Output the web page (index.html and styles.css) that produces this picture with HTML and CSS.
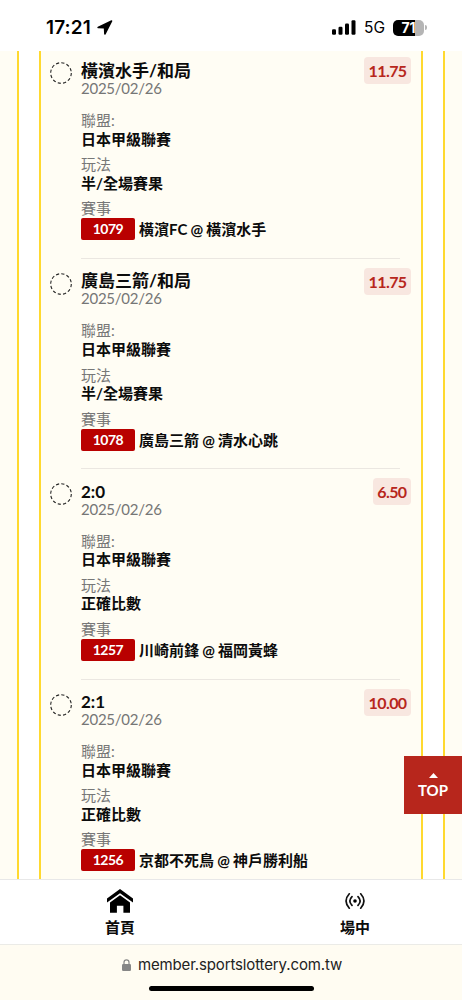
FILE: index.html
```html
<!DOCTYPE html>
<html lang="zh-Hant">
<head>
  <meta charset="UTF-8">
  <meta name="viewport" content="width=device-width, initial-scale=1.0">
  <title>Sports Lottery</title>
  <link rel="stylesheet" href="styles.css">
</head>
<body>
  <div class="status-bar">
    <div class="status-left">
      <span class="clock">17:21</span>
      <svg class="location" width="16" height="15" viewBox="0 0 16 15"><path d="M14.3 0.2 L0.8 6.8 Q-0.3 8 1 8.3 L6.8 8.4 L7.1 14 Q7.5 15.4 8.7 14.2 L15.3 1.2 Q15.5 0 14.3 0.2Z"/></svg>
    </div>
    <div class="status-right">
      <svg class="signal" width="24" height="15" viewBox="0 0 24 15">
        <rect x="0" y="9.2" width="4" height="5.6" rx="1.2"/>
        <rect x="6.5" y="6.7" width="4" height="8.1" rx="1.2"/>
        <rect x="13" y="3.5" width="4" height="11.3" rx="1.2"/>
        <rect x="19.5" y="0.2" width="4" height="14.6" rx="1.2"/>
      </svg>
      <span class="network">5G</span>
      <div class="battery"><span>71</span></div>
      <div class="battery-cap"></div>
    </div>
  </div>

  <div class="page">
    <div class="panel">
      <div class="bets">
        <div class="bet">
          <svg class="dot" width="22" height="22" viewBox="0 0 22 22"><circle cx="11" cy="11" r="10.3"/></svg>
          <div class="bet-body">
            <div class="bet-title">橫濱水手/和局</div>
            <div class="bet-date">2025/02/26</div>
            <div class="field first"><div class="label">聯盟:</div><div class="value">日本甲級聯賽</div></div>
            <div class="field"><div class="label">玩法</div><div class="value">半/全場賽果</div></div>
            <div class="field"><div class="label">賽事</div><div class="match"><span class="code">1079</span>橫濱FC @ 橫濱水手</div></div>
          </div>
          <div class="odds">11.75</div>
        </div>

        <div class="bet">
          <svg class="dot" width="22" height="22" viewBox="0 0 22 22"><circle cx="11" cy="11" r="10.3"/></svg>
          <div class="bet-body">
            <div class="bet-title">廣島三箭/和局</div>
            <div class="bet-date">2025/02/26</div>
            <div class="field first"><div class="label">聯盟:</div><div class="value">日本甲級聯賽</div></div>
            <div class="field"><div class="label">玩法</div><div class="value">半/全場賽果</div></div>
            <div class="field"><div class="label">賽事</div><div class="match"><span class="code">1078</span>廣島三箭 @ 清水心跳</div></div>
          </div>
          <div class="odds">11.75</div>
        </div>

        <div class="bet">
          <svg class="dot" width="22" height="22" viewBox="0 0 22 22"><circle cx="11" cy="11" r="10.3"/></svg>
          <div class="bet-body">
            <div class="bet-title">2:0</div>
            <div class="bet-date">2025/02/26</div>
            <div class="field first"><div class="label">聯盟:</div><div class="value">日本甲級聯賽</div></div>
            <div class="field"><div class="label">玩法</div><div class="value">正確比數</div></div>
            <div class="field"><div class="label">賽事</div><div class="match"><span class="code">1257</span>川崎前鋒 @ 福岡黃蜂</div></div>
          </div>
          <div class="odds">6.50</div>
        </div>

        <div class="bet">
          <svg class="dot" width="22" height="22" viewBox="0 0 22 22"><circle cx="11" cy="11" r="10.3"/></svg>
          <div class="bet-body">
            <div class="bet-title">2:1</div>
            <div class="bet-date">2025/02/26</div>
            <div class="field first"><div class="label">聯盟:</div><div class="value">日本甲級聯賽</div></div>
            <div class="field"><div class="label">玩法</div><div class="value">正確比數</div></div>
            <div class="field"><div class="label">賽事</div><div class="match"><span class="code">1256</span>京都不死鳥 @ 神戶勝利船</div></div>
          </div>
          <div class="odds">10.00</div>
        </div>
      </div>
    </div>
  </div>

  <a class="top-btn" href="#">
    <svg width="9" height="5" viewBox="0 0 9 5"><path d="M4.5 0 L9 5 H0Z"/></svg>
    <span>TOP</span>
  </a>

  <nav class="tab-bar">
    <a class="tab home" href="#">
      <svg width="26" height="24" viewBox="0 0 26 24"><path d="M13 0 L26 9.4 V13.6 L13 4.3 L0 13.6 V9.4Z"/><path d="M13 6.3 L23 13.4 V23.7 H16.4 V16.8 H9.9 V23.7 H3 V13.4Z"/></svg>
      <span>首頁</span>
    </a>
    <a class="tab live" href="#">
      <svg width="20" height="16" viewBox="0 0 20 16"><circle cx="10" cy="8" r="1.8"/><path d="M4.3 0.8 Q-2.2 8 4.3 15.2 M7 3.6 Q2.7 8 7 12.4 M13 3.6 Q17.3 8 13 12.4 M15.7 0.8 Q22.2 8 15.7 15.2"/></svg>
      <span>場中</span>
    </a>
  </nav>

  <div class="address-bar">
    <div class="address">
      <svg width="9" height="12" viewBox="0 0 9 12"><rect x="0" y="5" width="9" height="7" rx="1.2"/><path d="M2 5.5 V3.3 Q2 0.8 4.5 0.8 Q7 0.8 7 3.3 V5.5"/></svg>
      <span>member.sportslottery.com.tw</span>
    </div>
    <div class="home-indicator"></div>
  </div>
</body>
</html>
```

FILE: styles.css
```css
:root {
  --cream: #fffdf4;
  --yellow: #ffd92f;
  --red: #b7261c;
}

* {
  box-sizing: border-box;
}

body {
  margin: 0;
  height: 1000px;
  display: flex;
  flex-direction: column;
  overflow: hidden;
  background: var(--cream);
  color: #0c0c0c;
  font-family: Lato, "Noto Sans CJK TC", sans-serif;
}

a {
  color: inherit;
  text-decoration: none;
}

/* Status bar */
.status-bar {
  height: 51px;
  flex: none;
  background: #fff;
  display: flex;
  justify-content: space-between;
  padding: 18px 35px 0 46px;
  font-family: Inter, sans-serif;
  color: #000;
}

.status-left,
.status-right {
  display: flex;
  height: 19px;
  align-items: center;
}

.clock {
  font-size: 19px;
  font-weight: 600;
  letter-spacing: 0.1px;
  width: 51px;
}

.signal {
  margin-right: 8px;
}

.network {
  font-size: 15.5px;
  width: 29px;
}

.battery {
  width: 31px;
  height: 16px;
  border-radius: 5px;
  background: linear-gradient(90deg, #000 71%, #b5b5b5 71%);
  color: #fff;
  font-size: 14px;
  font-weight: 700;
  line-height: 16px;
  text-align: center;
}

.battery-cap {
  width: 2px;
  height: 5px;
  margin-left: 1px;
  border-radius: 0 2px 2px 0;
  background: #b5b5b5;
}

/* Bet list */
.page {
  height: 828px;
  flex: none;
  overflow: hidden;
  padding: 0 17px;
}

.panel {
  height: 100%;
  padding: 0 20px;
  background: #fff;
  border: solid var(--yellow);
  border-width: 0 2px;
}

.bets {
  display: flow-root;
  height: 100%;
  background: var(--cream);
  border: solid var(--yellow);
  border-width: 0 2px;
}

.bet {
  height: 210.4px;
  display: flex;
  align-items: flex-start;
  padding: 0 10px;
}

.bet:first-child {
  margin-top: -2.6px;
}

.dot {
  flex: none;
  margin: 14px 9px 0 -1px;
}

.dot circle {
  fill: none;
  stroke: #222;
  stroke-width: 1.1;
  stroke-dasharray: 3.2 2.19;
}

.bet-body {
  height: 100%;
  width: 319px;
  flex: none;
  margin-right: -60px;
  padding-top: 12.5px;
  border-bottom: 1px solid #ebe7e1;
}

.bet-title {
  font-size: 17px;
  font-weight: 700;
  line-height: 20px;
}

.bet-date {
  margin-top: -1px;
  font-size: 15px;
  line-height: 16px;
  letter-spacing: -0.25px;
  color: #767676;
}

.field {
  margin-top: 7.3px;
  font-size: 15px;
  line-height: 18.4px;
  white-space: nowrap;
}

.field.first {
  margin-top: 15.2px;
}

.label {
  font-weight: 400;
  color: #777;
}

.value,
.match {
  font-weight: 700;
}

.match {
  display: flex;
  align-items: center;
  height: 22px;
  margin-top: 0.6px;
  word-spacing: -0.5px;
}

.code {
  width: 54px;
  height: 22px;
  margin-right: 4px;
  border-radius: 2px;
  background: #b90000;
  color: #fff;
  font-size: 14px;
  line-height: 22px;
  letter-spacing: -0.5px;
  text-align: center;
}

.odds {
  flex: none;
  height: 27px;
  margin: 9px 0 0 auto;
  padding: 0 4.5px;
  border-radius: 4px;
  background: #f8e7e0;
  color: var(--red);
  font-size: 16px;
  font-weight: 700;
  line-height: 27px;
  letter-spacing: -0.6px;
}

/* Back to top */
.top-btn {
  position: fixed;
  right: 0;
  top: 756px;
  width: 58px;
  height: 58px;
  padding-top: 17px;
  display: flex;
  flex-direction: column;
  align-items: center;
  background: var(--red);
  color: #fff;
  font-size: 15px;
  font-weight: 700;
  line-height: 18px;
}

.top-btn svg {
  fill: #fff;
  margin-bottom: 3px;
}

/* Bottom tabs */
.tab-bar {
  height: 65px;
  flex: none;
  display: flex;
  padding: 0 0 0 4px;
  background: #fff;
  border-top: 1px solid #e8e8e8;
}

.tab {
  width: 50%;
  display: flex;
  flex-direction: column;
  align-items: center;
  font-size: 15px;
  font-weight: 700;
  line-height: 20px;
}

.home {
  padding-left: 3px;
}

.live {
  padding-left: 15px;
}

.home svg {
  margin: 9px 0 4px;
}

.live svg {
  margin: 13px 0 8px;
}

.live path {
  fill: none;
  stroke: #111;
  stroke-width: 1.7;
  stroke-linecap: round;
}

/* Browser address */
.address-bar {
  flex: 1;
  display: flex;
  flex-direction: column;
  align-items: center;
  justify-content: space-between;
  padding: 10px 0 9px;
  border-top: 1px solid #ebebe7;
  background: #fffcf2;
}

.address {
  display: flex;
  align-items: center;
  gap: 7px;
  padding-left: 2px;
  font-family: Inter, sans-serif;
  font-size: 15px;
  line-height: 20px;
  letter-spacing: -0.13px;
  color: #222;
}

.address svg {
  fill: #868686;
}

.address path {
  fill: none;
  stroke: #868686;
  stroke-width: 1.2;
}

.home-indicator {
  width: 165px;
  height: 5px;
  border-radius: 3px;
  background: #000;
}
```
